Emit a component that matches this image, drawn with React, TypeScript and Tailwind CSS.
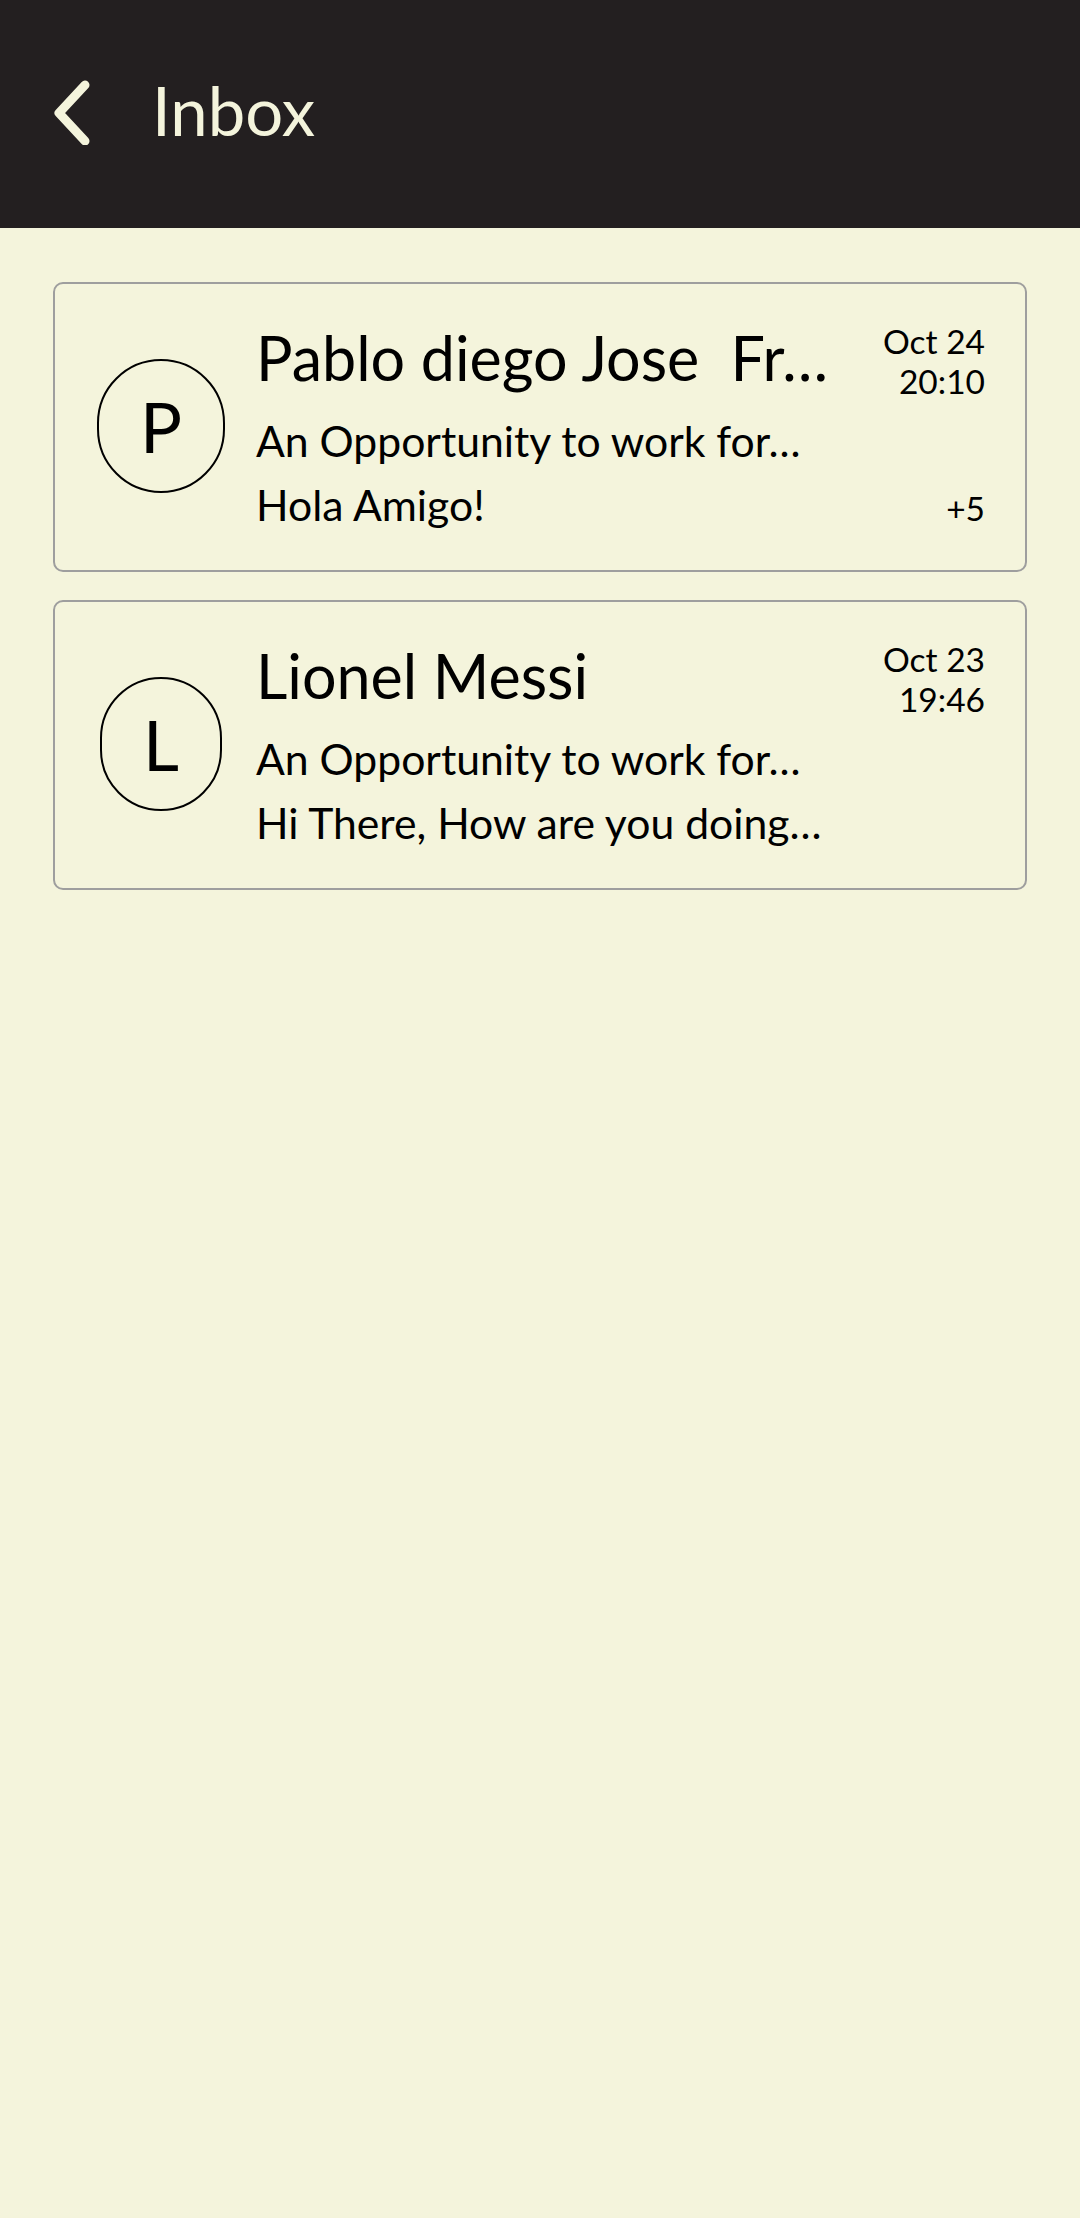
import React from "react";

type Mail = {
  initial: string;
  name: string;
  subject: string;
  preview: string;
  date: string;
  time: string;
  count?: string;
};

const mails: Mail[] = [
  {
    initial: "P",
    name: "Pablo diego Jose  Fr\u2026",
    subject: "An Opportunity to work for\u2026",
    preview: "Hola Amigo!",
    date: "Oct 24",
    time: "20:10",
    count: "+5",
  },
  {
    initial: "L",
    name: "Lionel Messi",
    subject: "An Opportunity to work for\u2026",
    preview: "Hi There, How are you doing\u2026",
    date: "Oct 23",
    time: "19:46",
  },
];

function MailCard({ m }: { m: Mail }) {
  return (
    <div className="flex items-center rounded-[10px] border-2 border-[#9e9e9e] pb-[33px] pl-[42px] pr-[40px] pt-[37px]">
      <div className="mb-[7px] flex w-[128px] shrink-0 justify-center">
        <div className="rounded-full border-2 border-black px-[41px] py-[23px] text-[70px] leading-[1.2] text-black">
          {m.initial}
        </div>
      </div>
      <div className="ml-[31px] flex min-w-0 flex-1 flex-col">
        <div className="overflow-hidden whitespace-pre text-[61px] leading-[1.2] text-black">
          {m.name}
        </div>
        <div className="mt-[15px] whitespace-pre text-[42.7px] leading-[64px] text-black">
          {m.subject}
        </div>
        <div className="whitespace-pre text-[42.7px] leading-[64px] text-black">
          {m.preview}
        </div>
      </div>
      <div className="flex shrink-0 flex-col items-end justify-between self-stretch pb-[9px] text-[33.5px] leading-[40px] text-black">
        <div className="flex flex-col items-end">
          <span>{m.date}</span>
          <span>{m.time}</span>
        </div>
        {m.count ? <span>{m.count}</span> : <span />}
      </div>
    </div>
  );
}

export default function App() {
  return (
    <div
      className="min-h-[2218px] w-[1080px] bg-[#f4f4dc]"
      style={{ fontFamily: "Lato, 'Noto Sans', sans-serif" }}
    >
      <header className="flex h-[228px] items-center bg-[#231f20] pb-2 pl-[48px]">
        <svg width="50" height="70" viewBox="0 0 50 70" fill="none">
          <path
            d="M37 10 L11 38 L37 66"
            stroke="#f4f4dc"
            strokeWidth="9"
            strokeLinecap="round"
            strokeLinejoin="round"
          />
        </svg>
        <h1 className="ml-[54px] text-[67px] font-normal leading-[1.2] text-[#f4f4dc]">
          Inbox
        </h1>
      </header>
      <main className="mx-[53px] mt-[54px] flex flex-col gap-[28px]">
        {mails.map((m) => (
          <MailCard key={m.initial} m={m} />
        ))}
      </main>
    </div>
  );
}
